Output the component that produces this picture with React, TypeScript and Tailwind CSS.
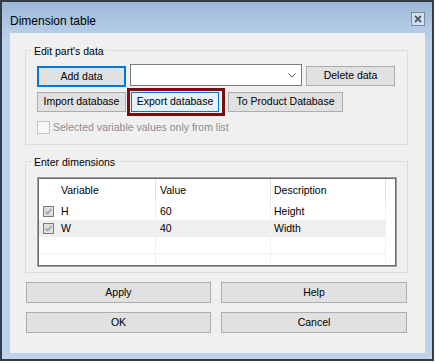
import type { ReactNode } from 'react';

type BtnProps = {
  children: ReactNode;
  className?: string;
  tone?: 'normal' | 'default' | 'hover';
};

const tones = {
  normal: 'border border-[#adadad] bg-[#e1e1e1]',
  default: 'border-2 border-[#0078d7] bg-[#e1e1e1]',
  hover: 'border border-[#0078d7] bg-[#e5f1fb]',
};

const Btn = ({ children, className = '', tone = 'normal' }: BtnProps) => (
  <button className={`flex items-center justify-center text-black ${tones[tone]} ${className}`}>
    {children}
  </button>
);

const GroupBox = ({
  label,
  className,
  children,
}: {
  label: string;
  className: string;
  children: ReactNode;
}) => (
  <div className={`relative border border-[#dcdcdc] ${className}`}>
    <span className="absolute -top-[7px] left-[6px] bg-[#f0f0f0] px-[2px] leading-[14px] text-black">
      {label}
    </span>
    {children}
  </div>
);

const RowCheck = () => (
  <svg width="11" height="11" viewBox="0 0 11 11">
    <rect x="0.5" y="0.5" width="10" height="10" fill="#e8e8e8" stroke="#7a7a7a" />
    <rect x="1.5" y="1.5" width="8" height="8" fill="#dcdcdc" />
    <path d="M2.5 5.5 L4.5 7.5 L8.5 3" fill="none" stroke="#a3a3a3" strokeWidth="1.6" />
  </svg>
);

const rows = [
  { name: 'H', value: '60', desc: 'Height' },
  { name: 'W', value: '40', desc: 'Width' },
];

export default function App() {
  return (
    <div className="h-[363px] w-[435px] bg-white font-['Liberation_Sans',Arial,sans-serif] text-[10.5px]">
      <div className="flex h-[361px] w-[434px] flex-col border-2 border-[#333b44] bg-[linear-gradient(to_bottom,#9db8d7,#bcd3eb_40px)]">
        {/* title bar */}
        <div className="flex h-[31px] items-start justify-between pl-[8px] pr-[7px]">
          <span className="mt-[12px] text-[12px] leading-[14px] text-black">Dimension table</span>
          <div className="mt-[10px] flex h-[14px] w-[14px] items-center justify-center border border-[#7d8c9c] bg-[#d3dfec]">
            <svg width="8" height="8" viewBox="0 0 8 8">
              <path d="M1 1 L7 7 M7 1 L1 7" stroke="#4b5866" strokeWidth="1.8" />
            </svg>
          </div>
        </div>

        {/* client area */}
        <div className="ml-[8px] flex h-[320px] w-[415px] flex-col bg-[#f0f0f0]">
          <GroupBox label="Edit part's data" className="ml-[15px] mt-[17px] h-[95px] w-[383px]">
            <div className="flex flex-col pl-[11px] pt-[13px]">
              <div className="flex h-[22px] items-start">
                <Btn tone="default" className="mt-[2px] h-[21px] w-[89px]">
                  Add data
                </Btn>
                <div className="ml-[4px] flex h-[22px] w-[172px] items-center justify-end border border-[#7a7a7a] bg-white pr-[5px]">
                  <svg width="8" height="5" viewBox="0 0 8 5">
                    <path d="M0.5 0.5 L4 4 L7.5 0.5" fill="none" stroke="#555" strokeWidth="1" />
                  </svg>
                </div>
                <Btn className="ml-[4px] mt-[2px] h-[20px] w-[89px]">Delete data</Btn>
              </div>
              <div className="mt-[2px] flex h-[28px] items-center">
                <Btn className="h-[20px] w-[89px]">Import database</Btn>
                <div className="ml-[1px] flex h-[28px] w-[98px] items-center border-[3px] border-[#7b0c0c] pl-[1px]">
                  <Btn tone="hover" className="h-[20px] w-[88px]">
                    Export database
                  </Btn>
                </div>
                <Btn className="ml-[3px] h-[20px] w-[115px]">To Product Database</Btn>
              </div>
              <div className="mt-[5px] flex items-center">
                <div className="h-[13px] w-[13px] border border-[#c4c4c4] bg-[#f7f7f7]" />
                <span className="ml-[3px] leading-[13px] text-[#8d8d8d]">
                  Selected variable values only from list
                </span>
              </div>
            </div>
          </GroupBox>

          <GroupBox label="Enter dimensions" className="ml-[15px] mt-[16px] h-[112px] w-[383px]">
            <div className="ml-[11px] mt-[15px] h-[90px] w-[360px] border border-[#a0a0a0]">
              <div className="h-full overflow-hidden border border-[#6a6a6a] bg-white">
                <div className="grid h-[24px] grid-cols-[19px_98px_115px_115px] items-stretch text-black">
                  <div />
                  <div className="flex items-center border-r border-[#e3e3e3] pl-[3px]">Variable</div>
                  <div className="flex items-center border-r border-[#e3e3e3] pl-[4px]">Value</div>
                  <div className="flex items-center border-r border-[#e3e3e3] pl-[3px]">Description</div>
                </div>
                {rows.map((r, i) => (
                  <div
                    key={r.name}
                    className={`grid h-[17px] w-[347px] grid-cols-[19px_98px_115px_115px] text-black ${
                      i % 2 ? 'bg-[#efefef]' : 'bg-white'
                    }`}
                  >
                    <div className="flex items-center pl-[4px]">
                      <RowCheck />
                    </div>
                    <div className="flex items-center border-r border-[#f0f0f0] pl-[3px]">{r.name}</div>
                    <div className="flex items-center border-r border-[#f0f0f0] pl-[4px]">{r.value}</div>
                    <div className="flex items-center border-r border-[#f0f0f0] pl-[3px]">{r.desc}</div>
                  </div>
                ))}
                {[0, 1].map((k) => (
                  <div
                    key={k}
                    className="grid h-[17px] w-[347px] grid-cols-[19px_98px_115px_115px] border-b border-[#f0f0f0]"
                  >
                    <div />
                    <div className="border-r border-[#f0f0f0]" />
                    <div className="border-r border-[#f0f0f0]" />
                    <div className="border-r border-[#f0f0f0]" />
                  </div>
                ))}
              </div>
            </div>
          </GroupBox>

          <div className="ml-[16px] mt-[9px] flex flex-col gap-[9px]">
            <div className="flex gap-[10px]">
              <Btn className="h-[21px] w-[185px]">Apply</Btn>
              <Btn className="h-[21px] w-[186px]">Help</Btn>
            </div>
            <div className="flex gap-[10px]">
              <Btn className="h-[21px] w-[185px]">OK</Btn>
              <Btn className="h-[21px] w-[186px]">Cancel</Btn>
            </div>
          </div>
        </div>
      </div>
    </div>
  );
}
